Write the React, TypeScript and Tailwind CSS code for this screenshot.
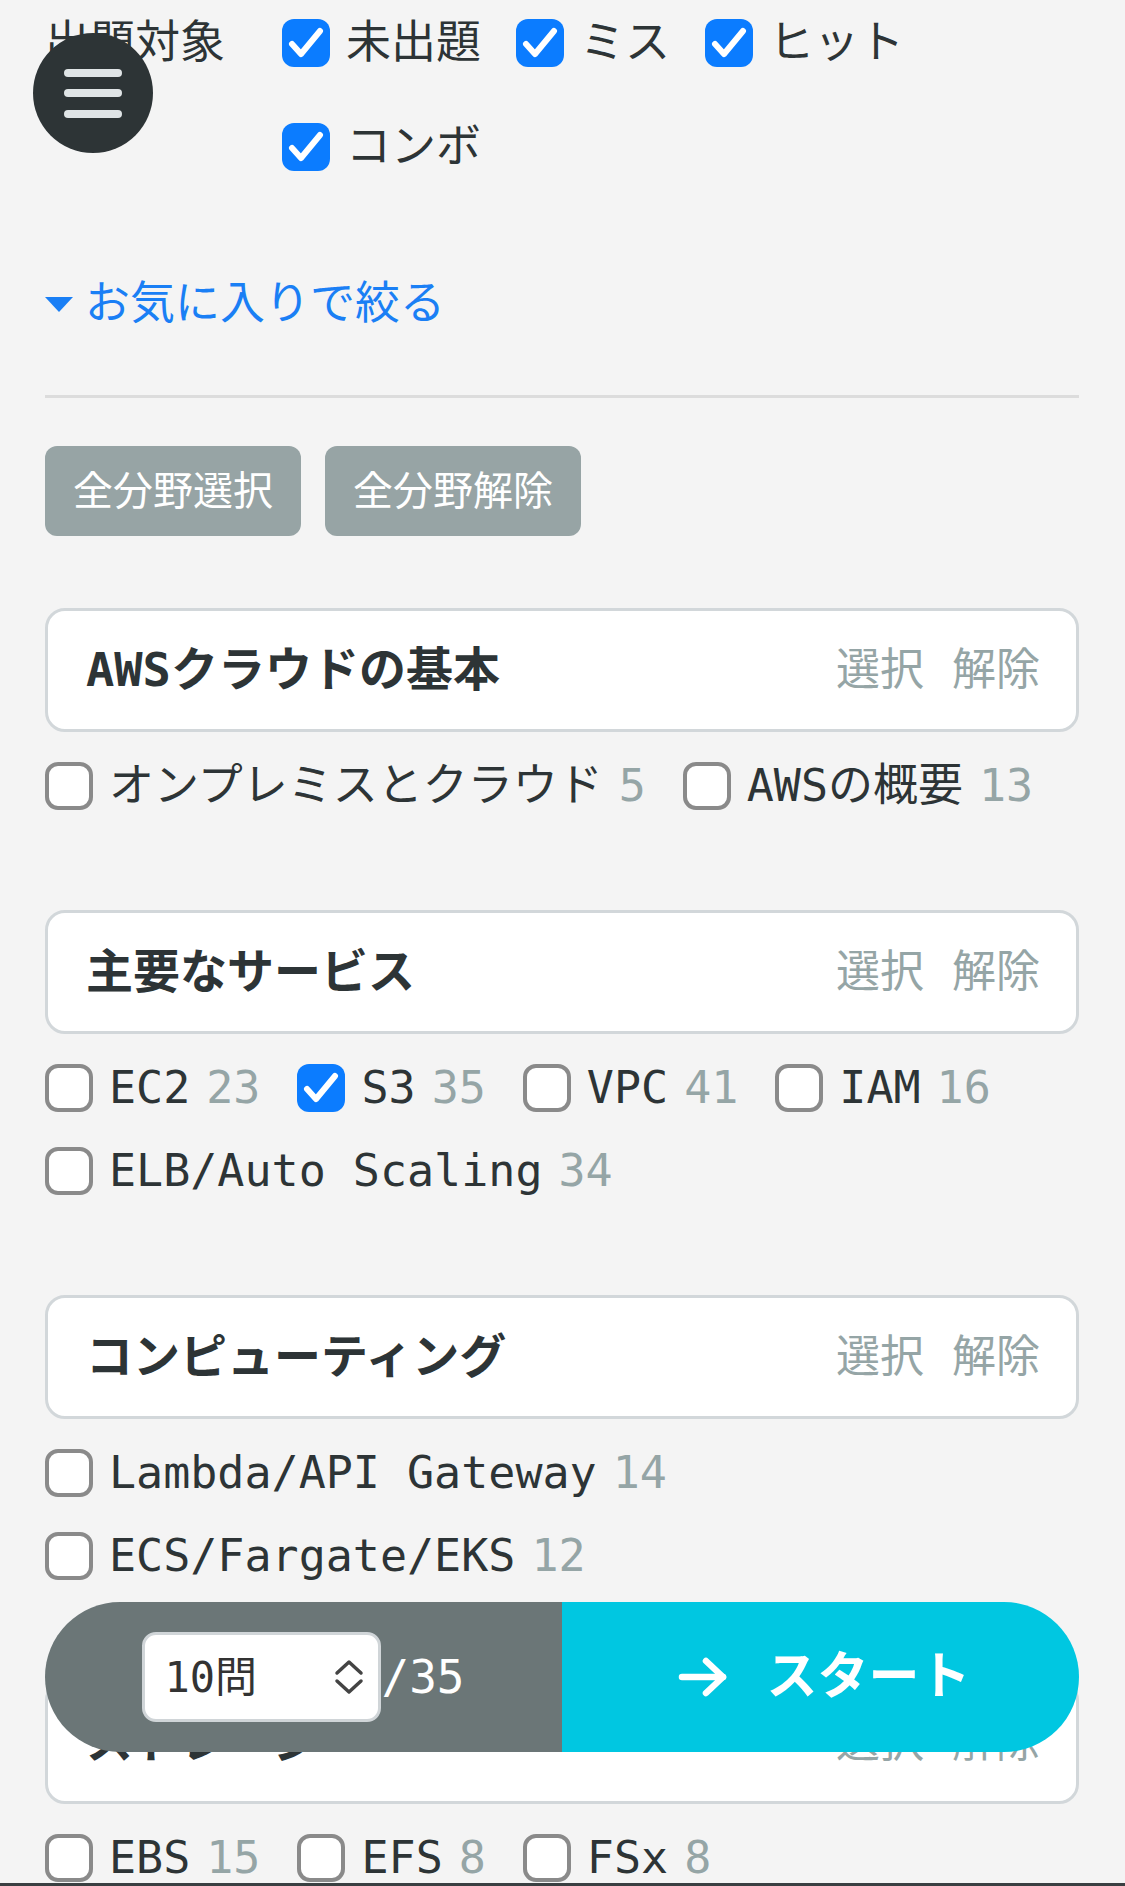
import React from "react";

type Item = { label: string; count: number; checked?: boolean };
type Section = { title: string; items: Item[] };

const sections: Section[] = [
  {
    title: "AWSクラウドの基本",
    items: [
      { label: "オンプレミスとクラウド", count: 5 },
      { label: "AWSの概要", count: 13 },
    ],
  },
  {
    title: "主要なサービス",
    items: [
      { label: "EC2", count: 23 },
      { label: "S3", count: 35, checked: true },
      { label: "VPC", count: 41 },
      { label: "IAM", count: 16 },
      { label: "ELB/Auto Scaling", count: 34 },
    ],
  },
  {
    title: "コンピューティング",
    items: [
      { label: "Lambda/API Gateway", count: 14 },
      { label: "ECS/Fargate/EKS", count: 12 },
    ],
  },
  {
    title: "ストレージ",
    items: [
      { label: "EBS", count: 15 },
      { label: "EFS", count: 8 },
      { label: "FSx", count: 8 },
    ],
  },
];

function Checkbox({ checked }: { checked?: boolean }) {
  if (checked) {
    return (
      <span className="w-[48px] h-[48px] shrink-0 rounded-[12px] bg-[#0b7cff] flex items-center justify-center">
        <svg width="48" height="48" viewBox="0 0 48 48">
          <polyline
            points="10,25 19,35 38,12"
            fill="none"
            stroke="white"
            strokeWidth="6"
            strokeLinecap="round"
            strokeLinejoin="round"
          />
        </svg>
      </span>
    );
  }
  return (
    <span className="w-[48px] h-[48px] shrink-0 rounded-[13px] border-[4px] border-[#8a8a8a] bg-white" />
  );
}

export default function App() {
  return (
    <div className="relative h-[1886px] overflow-hidden bg-[#f4f4f4] text-[#2d3436] [font-family:'DejaVu_Sans_Mono','Noto_Sans_CJK_JP',monospace]">
      <div className="pt-[2px] pl-[45px] pr-[46px]">
        {/* 出題対象 */}
        <div className="flex">
          <div className="w-[237px] h-[82px] shrink-0 flex items-center text-[45px]">出題対象</div>
          <div className="flex flex-wrap gap-y-[22px]">
            {["未出題", "ミス", "ヒット", "コンボ"].map((t) => (
              <label key={t} className="h-[82px] flex items-center gap-[16px] mr-[35px] text-[45px]">
                <Checkbox checked />
                <span>{t}</span>
              </label>
            ))}
          </div>
        </div>

        {/* お気に入り */}
        <div className="mt-[86px] h-[60px] flex items-center gap-[12px] text-[45px] text-[#1a7ff5]">
          <svg width="28" height="15" viewBox="0 0 28 15">
            <polygon points="0,0 28,0 14,15" fill="#1a7ff5" />
          </svg>
          <span>お気に入りで絞る</span>
        </div>

        <div className="mt-[61px] border-t-[3px] border-[#dcdcdc]" />

        <div className="mt-[48px] flex gap-[24px]">
          <button className="h-[90px] px-[28px] rounded-[12px] bg-[#97a4a5] text-white text-[40px]">全分野選択</button>
          <button className="h-[90px] px-[28px] rounded-[12px] bg-[#97a4a5] text-white text-[40px]">全分野解除</button>
        </div>

        <div className="mt-[72px]">
          {sections.map((s) => (
            <div key={s.title}>
              <div className="h-[124px] rounded-[20px] border-[3px] border-[#d2d7da] bg-white flex items-center justify-between pl-[38px] pr-[36px]">
                <span className="text-[47px] font-bold">{s.title}</span>
                <span className="flex gap-[28px] text-[44px] text-[#95a5a6]">
                  <span>選択</span>
                  <span>解除</span>
                </span>
              </div>
              <div className="pt-[30px] pb-[100px] flex flex-wrap gap-y-[35px]">
                {s.items.map((it) => (
                  <label key={it.label} className="h-[48px] flex items-center mr-[37px] text-[45px] leading-[48px] whitespace-pre">
                    <Checkbox checked={it.checked} />
                    <span className="ml-[16px]">{it.label}</span>
                    <span className="ml-[16px] text-[#95a5a6]">{it.count}</span>
                  </label>
                ))}
              </div>
            </div>
          ))}
        </div>
      </div>

      {/* hamburger */}
      <div className="absolute left-[33px] top-[33px] w-[120px] h-[120px] rounded-full bg-[#2d3436] flex flex-col items-center justify-center gap-[12.5px]">
        <span className="w-[58px] h-[8px] rounded-full bg-[#dfe4e6]" />
        <span className="w-[58px] h-[8px] rounded-full bg-[#dfe4e6]" />
        <span className="w-[58px] h-[8px] rounded-full bg-[#dfe4e6]" />
      </div>

      {/* bottom start bar */}
      <div className="absolute left-[45px] right-[46px] top-[1602px] h-[150px] rounded-full overflow-hidden flex">
        <div className="flex-1 bg-[#6b7677] flex items-center justify-center">
          <div className="w-[239px] h-[90px] bg-white border-[3px] border-[#d0d5d8] rounded-[14px] flex items-center justify-between pl-[19px] pr-[14px]">
            <span className="text-[42px] text-[#333]">10問</span>
            <svg width="30" height="36" viewBox="0 0 30 36">
              <polyline points="3,14 15,3 27,14" fill="none" stroke="#444" strokeWidth="3.5" strokeLinecap="round" strokeLinejoin="round" />
              <polyline points="3,22 15,33 27,22" fill="none" stroke="#444" strokeWidth="3.5" strokeLinecap="round" strokeLinejoin="round" />
            </svg>
          </div>
          <span className="text-white text-[46px]">/35</span>
        </div>
        <div className="flex-1 bg-[#00c7e1] flex items-center justify-center gap-[38px] text-white">
          <svg width="50" height="42" viewBox="0 0 50 42" className="ml-[8px]">
            <line x1="4" y1="21" x2="45" y2="21" stroke="white" strokeWidth="6.5" strokeLinecap="round" />
            <polyline points="28,5 45,21 28,37" fill="none" stroke="white" strokeWidth="6.5" strokeLinecap="round" strokeLinejoin="round" />
          </svg>
          <span className="text-[51px] font-bold">スタート</span>
        </div>
      </div>

      <div className="absolute left-0 right-0 bottom-0 h-[3px] bg-[#3a3f41]" />
    </div>
  );
}
